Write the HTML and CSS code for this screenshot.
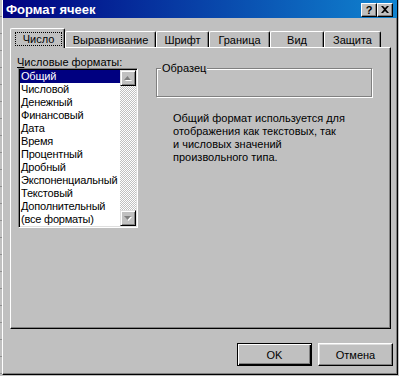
FILE: index.html
```html
<!DOCTYPE html>
<html lang="ru">
<head>
    <meta charset="UTF-8">
    <title>Формат ячеек</title>
    <link rel="stylesheet" href="styles.css">
</head>
<body>
    <div class="screen">
        <div class="edge"></div>
        <div class="dialog">
            <div class="titlebar">
                <span class="title">Формат ячеек</span>
                <div class="caption-buttons">
                    <span class="cap-btn help">?</span>
                    <span class="cap-btn">
                        <svg width="8" height="7" viewBox="0 0 8 7">
                            <path d="M0 0h2l2 2 2-2h2L5 3.5 8 7H6L4 5 2 7H0l3-3.5z" fill="#000"/>
                        </svg>
                    </span>
                </div>
            </div>

            <div class="tabs">
                <div class="tab active tab-number"><span class="focus">Число</span></div>
                <div class="tab tab-align">Выравнивание</div>
                <div class="tab tab-font">Шрифт</div>
                <div class="tab tab-border">Граница</div>
                <div class="tab tab-view">Вид</div>
                <div class="tab tab-protect">Защита</div>
            </div>

            <div class="panel">
                <div class="formats">
                    <div class="field-label"><u>Ч</u>исловые форматы:</div>
                    <div class="listbox">
                        <ul class="items">
                            <li class="selected">Общий</li>
                            <li>Числовой</li>
                            <li>Денежный</li>
                            <li>Финансовый</li>
                            <li>Дата</li>
                            <li>Время</li>
                            <li>Процентный</li>
                            <li>Дробный</li>
                            <li>Экспоненциальный</li>
                            <li>Текстовый</li>
                            <li>Дополнительный</li>
                            <li>(все форматы)</li>
                        </ul>
                        <div class="scrollbar">
                            <div class="sb-btn">
                                <svg width="8" height="5" viewBox="0 0 8 5">
                                    <polygon points="4.5,1 8,5 1,5" fill="#fff"/>
                                    <polygon points="3.5,0 7,4 0,4" fill="#808080"/>
                                </svg>
                            </div>
                            <div class="sb-track"></div>
                            <div class="sb-btn">
                                <svg width="8" height="5" viewBox="0 0 8 5">
                                    <polygon points="1,1 8,1 4.5,5" fill="#fff"/>
                                    <polygon points="0,0 7,0 3.5,4" fill="#808080"/>
                                </svg>
                            </div>
                        </div>
                    </div>
                </div>

                <div class="details">
                    <div class="groupbox">
                        <span class="group-label">Образец</span>
                    </div>
                    <p class="description">
                        Общий формат используется для<br>
                        отображения как текстовых, так<br>
                        и числовых значений<br>
                        произвольного типа.
                    </p>
                </div>
            </div>

            <div class="buttons">
                <button class="btn default">OK</button>
                <button class="btn">Отмена</button>
            </div>
        </div>
    </div>
</body>
</html>
```

FILE: styles.css
```css
body {
    margin: 0;
    background-color: #c0c0c0;
    font-family: 'Liberation Sans', Arial, sans-serif;
    font-size: 11px;
    color: #000;
}

.screen {
    display: flex;
    width: 399px;
    height: 376px;
}

.edge {
    width: 2px;
    background: repeating-linear-gradient(to bottom, #c0c0c0 0 16px, #909090 16px 17px);
}

.dialog {
    width: 396px;
    height: 375px;
    box-sizing: border-box;
    border-left: 1px solid #fff;
    border-right: 1px solid #000;
    border-bottom: 1px solid #000;
    box-shadow: inset -1px -1px #808080;
    display: flex;
    flex-direction: column;
}

/* title bar */

.titlebar {
    height: 18px;
    display: flex;
    align-items: center;
    justify-content: space-between;
    padding: 0 4px 0 3px;
    background: linear-gradient(to right, #000080, #1084d0);
    color: #fff;
    font-weight: bold;
    font-size: 13px;
}

.caption-buttons {
    display: flex;
    margin-top: 1px;
}

.cap-btn {
    width: 16px;
    height: 14px;
    box-sizing: border-box;
    display: flex;
    align-items: center;
    justify-content: center;
    background-color: #c0c0c0;
    border-top: 1px solid #fff;
    border-left: 1px solid #fff;
    border-right: 1px solid #000;
    border-bottom: 1px solid #000;
    box-shadow: inset -1px -1px #808080;
    color: #000;
}

.help {
    font-size: 11px;
    font-weight: bold;
}

/* tabs */

.tabs {
    display: flex;
    align-items: flex-end;
    height: 19px;
    margin: 10px 0 0 7px;
}

.tab {
    height: 16px;
    box-sizing: border-box;
    display: flex;
    align-items: center;
    justify-content: center;
    border-top: 1px solid #fff;
    border-left: 1px solid #fff;
    border-right: 1px solid #000;
    border-radius: 2px 2px 0 0;
    box-shadow: inset -1px 0 #808080;
    padding-top: 1px;
}

.tab.active {
    height: 20px;
    margin-bottom: -1px;
    position: relative;
    z-index: 1;
    background-color: #c0c0c0;
    justify-content: flex-start;
    padding: 0 0 0 4px;
}

.focus {
    width: 47px;
    height: 14px;
    box-sizing: border-box;
    border: 1px dotted #000;
    display: flex;
    align-items: center;
    justify-content: center;
}

.tab-number { width: 55px; }
.tab-align { width: 91px; }
.tab-font { width: 53px; }
.tab-border { width: 61px; }
.tab-view { width: 54px; }
.tab-protect { width: 57px; }

/* panel */

.panel {
    height: 282px;
    box-sizing: border-box;
    margin: 0 6px 0 7px;
    padding: 8px 0 0 6px;
    display: flex;
    border-top: 1px solid #fff;
    border-left: 1px solid #fff;
    border-right: 1px solid #000;
    border-bottom: 1px solid #000;
    box-shadow: inset -1px -1px #808080;
}

.formats {
    width: 121px;
}

.field-label {
    height: 12px;
    line-height: 12px;
}

.listbox {
    width: 120px;
    height: 160px;
    box-sizing: border-box;
    margin-left: 1px;
    padding: 1px;
    display: flex;
    background-color: #fff;
    border-top: 1px solid #808080;
    border-left: 1px solid #808080;
    border-right: 1px solid #fff;
    border-bottom: 1px solid #fff;
    box-shadow: inset 1px 1px #000, inset -1px -1px #dfdfdf;
}

.items {
    list-style: none;
    margin: 0;
    padding: 0;
    width: 100px;
    overflow: hidden;
}

.items li {
    height: 13px;
    line-height: 13px;
    padding-left: 1px;
    white-space: nowrap;
    letter-spacing: -0.2px;
}

.items .selected {
    background-color: #000080;
    color: #fff;
}

.scrollbar {
    width: 16px;
    display: flex;
    flex-direction: column;
}

.sb-btn {
    height: 16px;
    box-sizing: border-box;
    display: flex;
    align-items: center;
    justify-content: center;
    background-color: #c0c0c0;
    border-top: 1px solid #dfdfdf;
    border-left: 1px solid #dfdfdf;
    border-right: 1px solid #000;
    border-bottom: 1px solid #000;
    box-shadow: inset 1px 1px #fff, inset -1px -1px #808080;
}

.sb-track {
    flex: 1;
    background-image: repeating-conic-gradient(#c0c0c0 0 25%, #fff 0 50%);
    background-size: 2px 2px;
}

.details {
    margin-left: 18px;
}

.groupbox {
    position: relative;
    width: 216px;
    height: 29px;
    box-sizing: border-box;
    margin-top: 12px;
    border: 1px solid #808080;
    box-shadow: inset 1px 1px #fff, 1px 1px #fff;
}

.group-label {
    position: absolute;
    top: -7px;
    left: 4px;
    padding: 0 1px;
    line-height: 12px;
    background-color: #c0c0c0;
}

.description {
    margin: 15px 0 0 17px;
    line-height: 13px;
}

/* buttons */

.buttons {
    display: flex;
    justify-content: flex-end;
    gap: 6px;
    margin-top: 14px;
    padding-right: 4px;
}

.btn {
    width: 75px;
    height: 23px;
    box-sizing: border-box;
    padding: 0;
    font-family: inherit;
    font-size: 11px;
    color: #000;
    background-color: #c0c0c0;
    border-top: 1px solid #fff;
    border-left: 1px solid #fff;
    border-right: 1px solid #000;
    border-bottom: 1px solid #000;
    box-shadow: inset -1px -1px #808080, inset 1px 1px #dfdfdf;
}

.btn.default {
    border: 1px solid #000;
    box-shadow: inset 1px 1px #fff, inset -1px -1px #000, inset -2px -2px #808080;
}
```
